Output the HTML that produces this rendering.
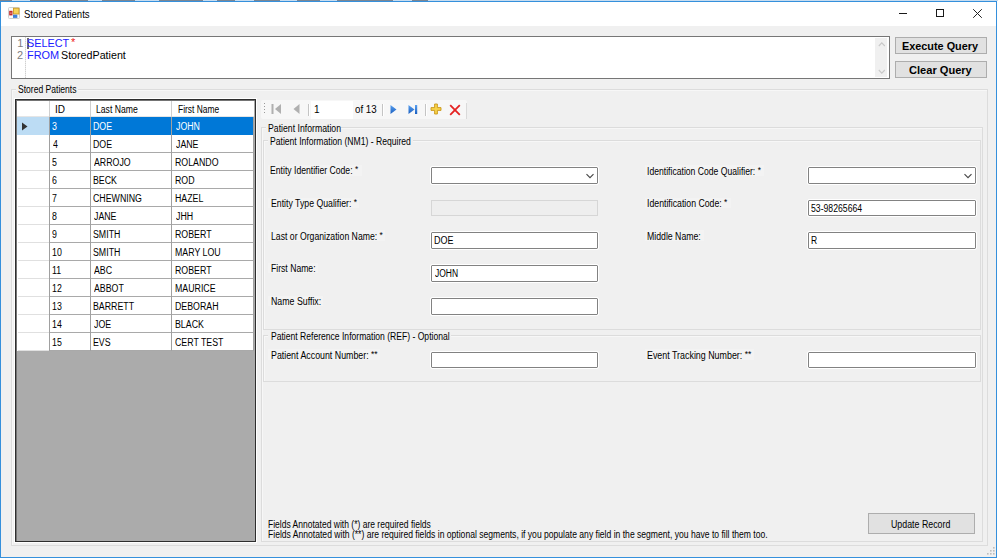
<!DOCTYPE html>
<html><head><meta charset="utf-8">
<style>
*{box-sizing:border-box;margin:0;padding:0}
html,body{width:998px;height:558px;overflow:hidden;background:#fdfeff;position:relative;font-family:"Liberation Sans",sans-serif}
.a{position:absolute}
.tx{position:absolute;white-space:pre;transform-origin:0 0;font-family:"Liberation Sans",sans-serif}
.gb{position:absolute;border:1px solid #dcdcdc;box-shadow:inset 1px 1px 0 #f7f7f7}
.tb{position:absolute;background:#fff;border:1px solid #828282;outline:1px solid #fff;border-radius:1px}
.btn{position:absolute;background:#e1e1e1;border:1px solid #adadad}
.lblbg{position:absolute;background:#f3f3f3}
.hl{position:absolute;height:1px}
.vl{position:absolute;width:1px}
</style></head><body>
<!-- background top strip -->
<div class="a" style="left:0;top:0;width:998px;height:1px;background:#c6dcf0"></div>
<div class="a" style="left:0px;top:0;width:12px;height:1px;background:#7a8694"></div><div class="a" style="left:30px;top:0;width:58px;height:1px;background:#7a8694"></div><div class="a" style="left:102px;top:0;width:33px;height:1px;background:#7a8694"></div><div class="a" style="left:159px;top:0;width:44px;height:1px;background:#7a8694"></div><div class="a" style="left:217px;top:0;width:18px;height:1px;background:#7a8694"></div><div class="a" style="left:254px;top:0;width:26px;height:1px;background:#7a8694"></div><div class="a" style="left:297px;top:0;width:23px;height:1px;background:#7a8694"></div><div class="a" style="left:337px;top:0;width:56px;height:1px;background:#7a8694"></div><div class="a" style="left:412px;top:0;width:16px;height:1px;background:#7a8694"></div>
<!-- window -->
<div class="a" style="left:0;top:1px;width:997px;height:557px;border:1px solid #3590dc;background:#f0f0f0"></div>
<div class="a" style="left:1px;top:2px;width:995px;height:24px;background:#fff"></div>
<!-- icon -->
<svg class="a" style="left:8px;top:7px" width="12" height="12" viewBox="0 0 12 12">
<rect x="0.5" y="0.5" width="11" height="11" rx="1" fill="#fafafa" stroke="#cfcfcf"/>
<rect x="5.5" y="1.2" width="5.5" height="5.8" fill="#f6d35a" stroke="#cf9a22" stroke-width="0.9"/>
<rect x="1.2" y="3.8" width="3.3" height="4.6" fill="#c42a2a"/>
<rect x="2.3" y="5.6" width="1.2" height="1" fill="#f4d0d0"/>
<rect x="5" y="7.7" width="4.3" height="3.2" fill="#3d80da"/>
</svg>
<!-- caption buttons -->
<div class="a" style="left:899px;top:13px;width:8px;height:1px;background:#1a1a1a"></div>
<div class="a" style="left:936px;top:9px;width:8px;height:8px;border:1px solid #1a1a1a"></div>
<svg class="a" style="left:973px;top:9px" width="9" height="9" viewBox="0 0 9 9"><path d="M0.2 0.2L8.8 8.8M8.8 0.2L0.2 8.8" stroke="#222" stroke-width="1"/></svg>

<!-- query editor -->
<div class="a" style="left:11px;top:36px;width:879px;height:43px;background:#fff;border:1px solid #767676"></div>
<div class="a" style="left:25px;top:37px;width:1px;height:41px;background:repeating-linear-gradient(#d0d0d0 0 1px,#ececec 1px 2px)"></div>
<div class="a" style="left:27px;top:38px;width:2px;height:11px;background:#6a6a6a"></div>
<div class="tx" style="left:71px;top:37px;font-size:11px;line-height:11px;color:#ee2020">*</div>
<div class="a" style="left:875px;top:38px;width:12px;height:39px;background:#f0f0f0"></div>
<svg class="a" style="left:875px;top:38px" width="12" height="39" viewBox="0 0 12 39"><path d="M3.8 8L6.8 4.8L9.8 8M3.8 32L6.8 35.2L9.8 32" fill="none" stroke="#c8c8c8" stroke-width="1.1"/></svg>

<!-- buttons -->
<div class="btn" style="left:895px;top:37px;width:92px;height:17px"></div>
<div class="btn" style="left:895px;top:61px;width:92px;height:17px"></div>

<!-- Stored patients groupbox -->
<div class="gb" style="left:11px;top:89px;width:977px;height:457px"></div>
<div class="a" style="left:16px;top:84px;width:62px;height:12px;background:#f0f0f0"></div>

<!-- grid -->
<div class="a" style="left:14px;top:98px;width:243px;height:445px;background:#fff"></div>
<div class="a" style="left:15px;top:99px;width:241px;height:443px;background:#ababab;border:1px solid #2e2e2e;box-shadow:inset 1px 1px 0 #747474"></div>
<div class="a" style="left:17px;top:101px;width:237px;height:16px;background:#fff"></div>
<div class="a" style="left:17px;top:117px;width:237px;height:234px;background:#fff"></div>
<div class="a" style="left:17px;top:117px;width:32px;height:18px;background:#bcdcf4"></div>
<div class="a" style="left:50px;top:117px;width:203px;height:18px;background:#0078d7"></div>
<div class="a" style="left:17px;top:116px;width:237px;height:1px;background:#e5e5e5"></div>
<div class="a" style="left:18px;top:152px;width:31px;height:1px;background:#e0e0e0"></div>
<div class="a" style="left:50px;top:152px;width:204px;height:1px;background:#a9a9a9"></div>
<div class="a" style="left:18px;top:170px;width:31px;height:1px;background:#e0e0e0"></div>
<div class="a" style="left:50px;top:170px;width:204px;height:1px;background:#a9a9a9"></div>
<div class="a" style="left:18px;top:188px;width:31px;height:1px;background:#e0e0e0"></div>
<div class="a" style="left:50px;top:188px;width:204px;height:1px;background:#a9a9a9"></div>
<div class="a" style="left:18px;top:206px;width:31px;height:1px;background:#e0e0e0"></div>
<div class="a" style="left:50px;top:206px;width:204px;height:1px;background:#a9a9a9"></div>
<div class="a" style="left:18px;top:224px;width:31px;height:1px;background:#e0e0e0"></div>
<div class="a" style="left:50px;top:224px;width:204px;height:1px;background:#a9a9a9"></div>
<div class="a" style="left:18px;top:242px;width:31px;height:1px;background:#e0e0e0"></div>
<div class="a" style="left:50px;top:242px;width:204px;height:1px;background:#a9a9a9"></div>
<div class="a" style="left:18px;top:260px;width:31px;height:1px;background:#e0e0e0"></div>
<div class="a" style="left:50px;top:260px;width:204px;height:1px;background:#a9a9a9"></div>
<div class="a" style="left:18px;top:278px;width:31px;height:1px;background:#e0e0e0"></div>
<div class="a" style="left:50px;top:278px;width:204px;height:1px;background:#a9a9a9"></div>
<div class="a" style="left:18px;top:296px;width:31px;height:1px;background:#e0e0e0"></div>
<div class="a" style="left:50px;top:296px;width:204px;height:1px;background:#a9a9a9"></div>
<div class="a" style="left:18px;top:314px;width:31px;height:1px;background:#e0e0e0"></div>
<div class="a" style="left:50px;top:314px;width:204px;height:1px;background:#a9a9a9"></div>
<div class="a" style="left:18px;top:332px;width:31px;height:1px;background:#e0e0e0"></div>
<div class="a" style="left:50px;top:332px;width:204px;height:1px;background:#a9a9a9"></div>
<div class="a" style="left:18px;top:350px;width:31px;height:1px;background:#e0e0e0"></div>
<div class="a" style="left:50px;top:350px;width:204px;height:1px;background:#a9a9a9"></div>
<div class="a" style="left:50px;top:350px;width:204px;height:1px;background:#a9a9a9"></div>
<div class="a" style="left:49px;top:117px;width:1px;height:234px;background:#a0a0a0"></div>
<div class="a" style="left:49px;top:101px;width:1px;height:16px;background:#cfcfcf"></div>
<div class="a" style="left:90px;top:117px;width:1px;height:234px;background:#a0a0a0"></div>
<div class="a" style="left:90px;top:101px;width:1px;height:16px;background:#cfcfcf"></div>
<div class="a" style="left:171px;top:117px;width:1px;height:234px;background:#a0a0a0"></div>
<div class="a" style="left:171px;top:101px;width:1px;height:16px;background:#cfcfcf"></div>
<div class="a" style="left:253px;top:117px;width:1px;height:234px;background:#a0a0a0"></div>
<svg class="a" style="left:21px;top:122px" width="8" height="9" viewBox="0 0 8 9"><path d="M1 0.5L6.5 4.5L1 8.5Z" fill="#333"/></svg>

<!-- toolbar -->
<div class="a" style="left:261px;top:100px;width:206px;height:19px;background:#f7f7f7;border-radius:2px"></div>
<div class="a" style="left:466px;top:103px;width:1px;height:16px;background:#dadada"></div>
<div class="a" style="left:264px;top:103px;width:1px;height:1px;background:#9a9a9a"></div>
<div class="a" style="left:264px;top:106px;width:1px;height:1px;background:#9a9a9a"></div>
<div class="a" style="left:264px;top:109px;width:1px;height:1px;background:#9a9a9a"></div>
<div class="a" style="left:264px;top:112px;width:1px;height:1px;background:#9a9a9a"></div>
<div class="a" style="left:308px;top:104px;width:1px;height:12px;background:#c4c4c4"></div>
<div class="a" style="left:309px;top:104px;width:1px;height:12px;background:#fff"></div>
<div class="a" style="left:382px;top:104px;width:1px;height:12px;background:#c4c4c4"></div>
<div class="a" style="left:383px;top:104px;width:1px;height:12px;background:#fff"></div>
<div class="a" style="left:425px;top:104px;width:1px;height:12px;background:#c4c4c4"></div>
<div class="a" style="left:426px;top:104px;width:1px;height:12px;background:#fff"></div>
<svg class="a" style="left:271px;top:104px" width="11" height="10" viewBox="0 0 11 10"><rect x="0.5" y="0" width="2" height="10" fill="#b0b0b0"/><path d="M10 0L4 5L10 10Z" fill="#b0b0b0"/></svg>
<svg class="a" style="left:293px;top:104px" width="7" height="10" viewBox="0 0 7 10"><path d="M6.5 0L0.5 5L6.5 10Z" fill="#b0b0b0"/></svg>
<svg class="a" style="left:390px;top:105px" width="7" height="10" viewBox="0 0 7 10"><defs><linearGradient id="bl" x1="0" y1="0" x2="0" y2="1"><stop offset="0" stop-color="#5aa0f0"/><stop offset="1" stop-color="#1a5fc0"/></linearGradient></defs><path d="M0.5 0L6.5 4.5L0.5 9Z" fill="url(#bl)"/></svg>
<svg class="a" style="left:408px;top:105px" width="10" height="10" viewBox="0 0 10 10"><path d="M0.5 0L6.5 4.5L0.5 9Z" fill="url(#bl)"/><rect x="7" y="0" width="2.2" height="9" fill="url(#bl)"/></svg>
<svg class="a" style="left:430px;top:103px" width="12" height="12" viewBox="0 0 12 12"><path d="M4.6 1H7.4V4.6H11V7.4H7.4V11H4.6V7.4H1V4.6H4.6Z" fill="#f7d34a" stroke="#c8961c" stroke-width="0.9"/></svg>
<svg class="a" style="left:449px;top:104px" width="12" height="12" viewBox="0 0 12 12"><path d="M1.2 1.2L10.8 10.8M10.8 1.2L1.2 10.8" stroke="#e52222" stroke-width="1.8"/></svg>
<div class="a" style="left:311px;top:101px;width:42px;height:18px;background:#fff"></div>

<!-- Patient Information groupboxes -->
<div class="gb" style="left:261px;top:127px;width:722px;height:415px"></div>
<div class="a" style="left:266px;top:121px;width:75px;height:12px;background:#f0f0f0"></div>
<div class="gb" style="left:263px;top:140px;width:718px;height:190px"></div>
<div class="a" style="left:268px;top:134px;width:145px;height:12px;background:#f0f0f0"></div>
<div class="gb" style="left:263px;top:335px;width:718px;height:47px"></div>
<div class="a" style="left:268px;top:330px;width:183px;height:10px;background:#f0f0f0"></div>

<!-- label backgrounds -->
<div class="lblbg" style="left:268px;top:165px;width:94px;height:11px"></div>
<div class="lblbg" style="left:268px;top:198px;width:91px;height:10px"></div>
<div class="lblbg" style="left:268px;top:230px;width:117px;height:11px"></div>
<div class="lblbg" style="left:268px;top:263px;width:50px;height:10px"></div>
<div class="lblbg" style="left:268px;top:296px;width:55px;height:10px"></div>
<div class="lblbg" style="left:268px;top:349px;width:112px;height:11px"></div>
<div class="lblbg" style="left:645px;top:165px;width:119px;height:11px"></div>
<div class="lblbg" style="left:645px;top:198px;width:86px;height:10px"></div>
<div class="lblbg" style="left:645px;top:230px;width:59px;height:11px"></div>
<div class="lblbg" style="left:645px;top:349px;width:109px;height:11px"></div>

<!-- inputs -->
<div class="tb" style="left:431px;top:167px;width:167px;height:17px"></div>
<svg class="a" style="left:585px;top:172px" width="10" height="8" viewBox="0 0 10 8"><path d="M1.5 2.2L5 5.7L8.5 2.2" fill="none" stroke="#484848" stroke-width="1.15"/></svg>
<div class="a" style="left:431px;top:200px;width:167px;height:16px;border:1px solid #d6d6d6;background:#eeeeee"></div>
<div class="tb" style="left:431px;top:232px;width:167px;height:17px"></div>
<div class="tb" style="left:431px;top:265px;width:167px;height:17px"></div>
<div class="tb" style="left:431px;top:298px;width:167px;height:17px"></div>
<div class="tb" style="left:431px;top:352px;width:167px;height:16px"></div>
<div class="tb" style="left:808px;top:167px;width:168px;height:17px"></div>
<svg class="a" style="left:963px;top:172px" width="10" height="8" viewBox="0 0 10 8"><path d="M1.5 2.2L5 5.7L8.5 2.2" fill="none" stroke="#484848" stroke-width="1.15"/></svg>
<div class="tb" style="left:808px;top:200px;width:168px;height:16px"></div>
<div class="tb" style="left:808px;top:232px;width:168px;height:17px"></div>
<div class="tb" style="left:808px;top:352px;width:168px;height:16px"></div>

<!-- update button -->
<div class="btn" style="left:868px;top:513px;width:107px;height:21px"></div>

<!-- size grip -->
<svg class="a" style="left:986px;top:546px" width="10" height="10" viewBox="0 0 10 10"><g fill="#bdbdbd"><rect x="7" y="1" width="1.6" height="1.6"/><rect x="4" y="4" width="1.6" height="1.6"/><rect x="7" y="4" width="1.6" height="1.6"/><rect x="1" y="7" width="1.6" height="1.6"/><rect x="4" y="7" width="1.6" height="1.6"/><rect x="7" y="7" width="1.6" height="1.6"/></g></svg>

<div class="tx" style="left:23.89px;top:9.20px;font-size:10.5px;line-height:10.5px;font-weight:400;color:#000;transform:scaleX(0.9143)">Stored Patients</div>
<div class="tx" style="left:17.30px;top:38.20px;font-size:11px;line-height:11px;font-weight:400;color:#7d7d7d;transform:scaleX(1.0000)">1</div>
<div class="tx" style="left:17.00px;top:49.80px;font-size:11px;line-height:11px;font-weight:400;color:#7d7d7d;transform:scaleX(1.0000)">2</div>
<div class="tx" style="left:27.01px;top:38.00px;font-size:11px;line-height:11px;font-weight:400;color:#2020ff;transform:scaleX(0.9854)">SELECT</div>
<div class="tx" style="left:26.51px;top:49.80px;font-size:11px;line-height:11px;font-weight:400;color:#2020ff;transform:scaleX(0.9935)">FROM</div>
<div class="tx" style="left:61.43px;top:49.80px;font-size:11px;line-height:11px;font-weight:400;color:#000;transform:scaleX(0.9723)">StoredPatient</div>
<div class="tx" style="left:901.81px;top:41.00px;font-size:11px;line-height:11px;font-weight:700;color:#000;transform:scaleX(0.9868)">Execute Query</div>
<div class="tx" style="left:908.99px;top:65.40px;font-size:11px;line-height:11px;font-weight:700;color:#000;transform:scaleX(1.0066)">Clear Query</div>
<div class="tx" style="left:17.64px;top:85.30px;font-size:10px;line-height:10px;font-weight:400;color:#000;transform:scaleX(0.8552)">Stored Patients</div>
<div class="tx" style="left:55.10px;top:105.30px;font-size:10px;line-height:10px;font-weight:400;color:#000;transform:scaleX(1.0000)">ID</div>
<div class="tx" style="left:96.34px;top:105.30px;font-size:10px;line-height:10px;font-weight:400;color:#000;transform:scaleX(0.8638)">Last Name</div>
<div class="tx" style="left:177.86px;top:105.30px;font-size:10px;line-height:10px;font-weight:400;color:#000;transform:scaleX(0.8426)">First Name</div>
<div class="tx" style="left:51.92px;top:121.80px;font-size:10px;line-height:10px;font-weight:400;color:#fff;transform:scaleX(0.8800)">3</div>
<div class="tx" style="left:93.12px;top:121.80px;font-size:10px;line-height:10px;font-weight:400;color:#fff;transform:scaleX(0.8800)">DOE</div>
<div class="tx" style="left:175.50px;top:121.80px;font-size:10px;line-height:10px;font-weight:400;color:#fff;transform:scaleX(0.8800)">JOHN</div>
<div class="tx" style="left:52.80px;top:139.80px;font-size:10px;line-height:10px;font-weight:400;color:#000;transform:scaleX(0.8800)">4</div>
<div class="tx" style="left:93.12px;top:139.80px;font-size:10px;line-height:10px;font-weight:400;color:#000;transform:scaleX(0.8800)">DOE</div>
<div class="tx" style="left:175.50px;top:139.80px;font-size:10px;line-height:10px;font-weight:400;color:#000;transform:scaleX(0.8800)">JANE</div>
<div class="tx" style="left:51.92px;top:157.80px;font-size:10px;line-height:10px;font-weight:400;color:#000;transform:scaleX(0.8800)">5</div>
<div class="tx" style="left:94.00px;top:157.80px;font-size:10px;line-height:10px;font-weight:400;color:#000;transform:scaleX(0.8800)">ARROJO</div>
<div class="tx" style="left:174.62px;top:157.80px;font-size:10px;line-height:10px;font-weight:400;color:#000;transform:scaleX(0.8800)">ROLANDO</div>
<div class="tx" style="left:51.92px;top:175.80px;font-size:10px;line-height:10px;font-weight:400;color:#000;transform:scaleX(0.8800)">6</div>
<div class="tx" style="left:93.12px;top:175.80px;font-size:10px;line-height:10px;font-weight:400;color:#000;transform:scaleX(0.8800)">BECK</div>
<div class="tx" style="left:174.62px;top:175.80px;font-size:10px;line-height:10px;font-weight:400;color:#000;transform:scaleX(0.8800)">ROD</div>
<div class="tx" style="left:51.92px;top:193.80px;font-size:10px;line-height:10px;font-weight:400;color:#000;transform:scaleX(0.8800)">7</div>
<div class="tx" style="left:93.12px;top:193.80px;font-size:10px;line-height:10px;font-weight:400;color:#000;transform:scaleX(0.8800)">CHEWNING</div>
<div class="tx" style="left:174.62px;top:193.80px;font-size:10px;line-height:10px;font-weight:400;color:#000;transform:scaleX(0.8800)">HAZEL</div>
<div class="tx" style="left:51.92px;top:211.80px;font-size:10px;line-height:10px;font-weight:400;color:#000;transform:scaleX(0.8800)">8</div>
<div class="tx" style="left:94.00px;top:211.80px;font-size:10px;line-height:10px;font-weight:400;color:#000;transform:scaleX(0.8800)">JANE</div>
<div class="tx" style="left:175.50px;top:211.80px;font-size:10px;line-height:10px;font-weight:400;color:#000;transform:scaleX(0.8800)">JHH</div>
<div class="tx" style="left:51.92px;top:229.80px;font-size:10px;line-height:10px;font-weight:400;color:#000;transform:scaleX(0.8800)">9</div>
<div class="tx" style="left:93.12px;top:229.80px;font-size:10px;line-height:10px;font-weight:400;color:#000;transform:scaleX(0.8800)">SMITH</div>
<div class="tx" style="left:174.62px;top:229.80px;font-size:10px;line-height:10px;font-weight:400;color:#000;transform:scaleX(0.8800)">ROBERT</div>
<div class="tx" style="left:51.92px;top:247.80px;font-size:10px;line-height:10px;font-weight:400;color:#000;transform:scaleX(0.8800)">10</div>
<div class="tx" style="left:93.12px;top:247.80px;font-size:10px;line-height:10px;font-weight:400;color:#000;transform:scaleX(0.8800)">SMITH</div>
<div class="tx" style="left:174.62px;top:247.80px;font-size:10px;line-height:10px;font-weight:400;color:#000;transform:scaleX(0.8800)">MARY LOU</div>
<div class="tx" style="left:51.92px;top:265.80px;font-size:10px;line-height:10px;font-weight:400;color:#000;transform:scaleX(0.8800)">11</div>
<div class="tx" style="left:94.00px;top:265.80px;font-size:10px;line-height:10px;font-weight:400;color:#000;transform:scaleX(0.8800)">ABC</div>
<div class="tx" style="left:174.62px;top:265.80px;font-size:10px;line-height:10px;font-weight:400;color:#000;transform:scaleX(0.8800)">ROBERT</div>
<div class="tx" style="left:51.92px;top:283.80px;font-size:10px;line-height:10px;font-weight:400;color:#000;transform:scaleX(0.8800)">12</div>
<div class="tx" style="left:94.00px;top:283.80px;font-size:10px;line-height:10px;font-weight:400;color:#000;transform:scaleX(0.8800)">ABBOT</div>
<div class="tx" style="left:174.62px;top:283.80px;font-size:10px;line-height:10px;font-weight:400;color:#000;transform:scaleX(0.8800)">MAURICE</div>
<div class="tx" style="left:51.92px;top:301.80px;font-size:10px;line-height:10px;font-weight:400;color:#000;transform:scaleX(0.8800)">13</div>
<div class="tx" style="left:93.12px;top:301.80px;font-size:10px;line-height:10px;font-weight:400;color:#000;transform:scaleX(0.8800)">BARRETT</div>
<div class="tx" style="left:174.62px;top:301.80px;font-size:10px;line-height:10px;font-weight:400;color:#000;transform:scaleX(0.8800)">DEBORAH</div>
<div class="tx" style="left:51.92px;top:319.80px;font-size:10px;line-height:10px;font-weight:400;color:#000;transform:scaleX(0.8800)">14</div>
<div class="tx" style="left:94.00px;top:319.80px;font-size:10px;line-height:10px;font-weight:400;color:#000;transform:scaleX(0.8800)">JOE</div>
<div class="tx" style="left:174.62px;top:319.80px;font-size:10px;line-height:10px;font-weight:400;color:#000;transform:scaleX(0.8800)">BLACK</div>
<div class="tx" style="left:51.92px;top:337.80px;font-size:10px;line-height:10px;font-weight:400;color:#000;transform:scaleX(0.8800)">15</div>
<div class="tx" style="left:93.12px;top:337.80px;font-size:10px;line-height:10px;font-weight:400;color:#000;transform:scaleX(0.8800)">EVS</div>
<div class="tx" style="left:174.62px;top:337.80px;font-size:10px;line-height:10px;font-weight:400;color:#000;transform:scaleX(0.8800)">CERT TEST</div>
<div class="tx" style="left:314.10px;top:105.30px;font-size:10px;line-height:10px;font-weight:400;color:#000;transform:scaleX(1.0000)">1</div>
<div class="tx" style="left:355.43px;top:105.30px;font-size:10px;line-height:10px;font-weight:400;color:#000;transform:scaleX(0.9714)">of 13</div>
<div class="tx" style="left:267.83px;top:123.70px;font-size:10px;line-height:10px;font-weight:400;color:#000;transform:scaleX(0.8695)">Patient Information</div>
<div class="tx" style="left:270.44px;top:136.80px;font-size:10px;line-height:10px;font-weight:400;color:#000;transform:scaleX(0.8593)">Patient Information (NM1) - Required</div>
<div class="tx" style="left:270.44px;top:166.40px;font-size:10px;line-height:10px;font-weight:400;color:#000;transform:scaleX(0.8634)">Entity Identifier Code: <span style="font-size:9.5px;position:relative;top:-2px">*</span></div>
<div class="tx" style="left:270.53px;top:199.10px;font-size:10px;line-height:10px;font-weight:400;color:#000;transform:scaleX(0.8722)">Entity Type Qualifier: <span style="font-size:9.5px;position:relative;top:-2px">*</span></div>
<div class="tx" style="left:270.53px;top:231.70px;font-size:10px;line-height:10px;font-weight:400;color:#000;transform:scaleX(0.8685)">Last or Organization Name: <span style="font-size:9.5px;position:relative;top:-2px">*</span></div>
<div class="tx" style="left:270.54px;top:264.30px;font-size:10px;line-height:10px;font-weight:400;color:#000;transform:scaleX(0.8620)">First Name:</div>
<div class="tx" style="left:270.52px;top:296.90px;font-size:10px;line-height:10px;font-weight:400;color:#000;transform:scaleX(0.8800)">Name Suffix:</div>
<div class="tx" style="left:647.34px;top:166.70px;font-size:10px;line-height:10px;font-weight:400;color:#000;transform:scaleX(0.8618)">Identification Code Qualifier: <span style="font-size:9.5px;position:relative;top:-2px">*</span></div>
<div class="tx" style="left:647.33px;top:199.10px;font-size:10px;line-height:10px;font-weight:400;color:#000;transform:scaleX(0.8725)">Identification Code: <span style="font-size:9.5px;position:relative;top:-2px">*</span></div>
<div class="tx" style="left:647.33px;top:231.70px;font-size:10px;line-height:10px;font-weight:400;color:#000;transform:scaleX(0.8717)">Middle Name:</div>
<div class="tx" style="left:270.64px;top:331.90px;font-size:10px;line-height:10px;font-weight:400;color:#000;transform:scaleX(0.8570)">Patient Reference Information (REF) - Optional</div>
<div class="tx" style="left:270.62px;top:350.70px;font-size:10px;line-height:10px;font-weight:400;color:#000;transform:scaleX(0.8824)">Patient Account Number: <span style="font-size:9.5px;position:relative;top:-2px">**</span></div>
<div class="tx" style="left:647.31px;top:350.70px;font-size:10px;line-height:10px;font-weight:400;color:#000;transform:scaleX(0.8879)">Event Tracking Number: <span style="font-size:9.5px;position:relative;top:-2px">**</span></div>
<div class="tx" style="left:433.60px;top:236.40px;font-size:10px;line-height:10px;font-weight:400;color:#000;transform:scaleX(0.9000)">DOE</div>
<div class="tx" style="left:434.50px;top:269.00px;font-size:10px;line-height:10px;font-weight:400;color:#000;transform:scaleX(0.8500)">JOHN</div>
<div class="tx" style="left:810.63px;top:203.90px;font-size:10px;line-height:10px;font-weight:400;color:#000;transform:scaleX(0.8672)">53-98265664</div>
<div class="tx" style="left:810.65px;top:236.40px;font-size:10px;line-height:10px;font-weight:400;color:#000;transform:scaleX(0.8500)">R</div>
<div class="tx" style="left:268.35px;top:520.40px;font-size:10px;line-height:10px;font-weight:400;color:#000;transform:scaleX(0.8516)">Fields Annotated with (*) are required fields</div>
<div class="tx" style="left:268.34px;top:530.30px;font-size:10px;line-height:10px;font-weight:400;color:#000;transform:scaleX(0.8577)">Fields Annotated with (**) are required fields in optional segments, if you populate any field in the segment, you have to fill them too.</div>
<div class="tx" style="left:891.32px;top:520.00px;font-size:10px;line-height:10px;font-weight:400;color:#000;transform:scaleX(0.8818)">Update Record</div>
</body></html>
